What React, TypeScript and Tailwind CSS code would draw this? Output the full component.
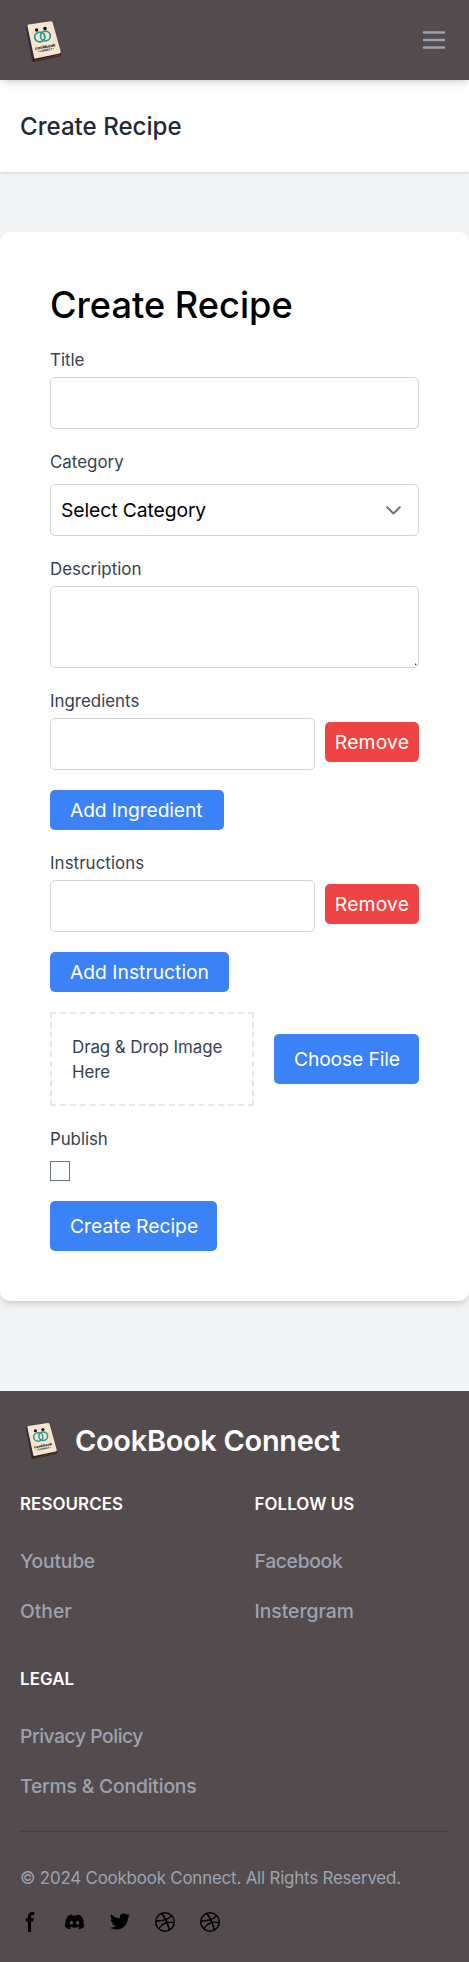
import type { ReactNode } from "react";

function Logo({ className }: { className: string }) {
  return (
    <svg className={className} viewBox="0 0 38 43" fill="none" aria-hidden="true">
      <path d="M2 5 L1 8 L7.6 41.5 L9.5 42 L35.6 36 L36.2 33 Z" fill="#2c1c18" />
      <path d="M2 5 L1.3 8 L7.6 40.5 L9.4 38 Z" fill="#263341" />
      <path d="M9 41 L35.4 34.8" stroke="#7a4a27" strokeWidth="0.8" />
      <path d="M3.6 4.4 L25.6 1.2 Q27.2 1 27.6 2.6 L35.7 31.6 Q36 33 34.6 33.4 L10.6 38.6 Q9.4 38.8 9.1 37.4 L2.4 6 Q2.2 4.7 3.6 4.4Z" fill="#f6e4cd" />
      <circle cx="11.6" cy="10" r="1.7" fill="#111" />
      <circle cx="20" cy="8.6" r="1.8" fill="#111" />
      <ellipse cx="14.8" cy="17" rx="5.2" ry="4.8" stroke="#2a9a94" strokeWidth="1.7" />
      <ellipse cx="20.4" cy="16" rx="4.9" ry="4.8" stroke="#2a9a94" strokeWidth="1.7" />
      <g transform="rotate(-11 20 27)" fill="#1b1b1b" fontFamily="Inter, sans-serif" fontWeight="800" textAnchor="middle">
        <text x="20.2" y="28.2" fontSize="4.2">cookbook</text>
        <text x="20.2" y="31.2" fontSize="2.6">• CONNECT •</text>
      </g>
    </svg>
  );
}

function Label({ children, className = "" }: { children: ReactNode; className?: string }) {
  return <label className={`block h-[25px] text-[16.9px] leading-[27px] text-[#374151] ${className}`}>{children}</label>;
}

const field = "block h-[52px] w-full min-w-0 rounded-[5px] border border-[#d1d5db] bg-white px-2.5 outline-none";
const blue = "block rounded-[5px] bg-[#3b82f6] px-5 text-left text-[19.3px] leading-[30px] whitespace-nowrap text-white";

function ListField({ label, add, labelClass, addClass }: { label: string; add: string; labelClass: string; addClass: string }) {
  return (
    <div className="mb-5">
      <Label className={labelClass}>{label}</Label>
      <div className="mt-[5px] mb-5 flex items-start gap-2.5">
        <input type="text" className={field} />
        <button type="button" className="mt-1 h-10 w-[94px] shrink-0 rounded-[5px] bg-[#ef4444] text-[19.3px] leading-[30px] tracking-[0.2px] text-white">
          Remove
        </button>
      </div>
      <button type="button" className={`${blue} h-10 ${addClass}`}>{add}</button>
    </div>
  );
}

function FooterColumn({ title, links }: { title: string; links: [string, string][] }) {
  return (
    <div>
      <h2 className="mb-[30px] h-[25px] text-[16.9px] leading-[27px] font-semibold tracking-[0.08px] text-white uppercase">{title}</h2>
      <ul className="flex flex-col gap-5 text-[19.3px] leading-[30px] font-medium text-[#9ca3af]">
        {links.map(([text, tracking]) => (
          <li key={text}>
            <a href="#" className={`whitespace-nowrap ${tracking}`}>{text}</a>
          </li>
        ))}
      </ul>
    </div>
  );
}

const dribbble =
  "M10 0a10 10 0 1 0 10 10A10.009 10.009 0 0 0 10 0Zm6.613 4.614a8.523 8.523 0 0 1 1.93 5.32 20.094 20.094 0 0 0-5.949-.274c-.059-.149-.122-.292-.184-.441a23.879 23.879 0 0 0-.566-1.239 11.41 11.41 0 0 0 4.769-3.366ZM8 1.707a8.821 8.821 0 0 1 2-.238 8.5 8.5 0 0 1 5.664 2.152 9.608 9.608 0 0 1-4.476 3.087A45.758 45.758 0 0 0 8 1.707ZM1.642 8.262a8.57 8.57 0 0 1 4.73-5.981A53.998 53.998 0 0 1 9.54 7.222a32.078 32.078 0 0 1-7.9 1.04h.002Zm2.01 7.46a8.51 8.51 0 0 1-2.2-5.707v-.262a31.64 31.64 0 0 0 8.777-1.219c.243.477.477.964.692 1.449-.114.032-.227.067-.336.1a13.569 13.569 0 0 0-6.942 5.636l.009.003ZM10 18.556a8.508 8.508 0 0 1-5.243-1.8 11.717 11.717 0 0 1 6.7-5.332.509.509 0 0 1 .055-.02 35.65 35.65 0 0 1 1.819 6.476 8.476 8.476 0 0 1-3.331.676Zm4.772-1.462A37.232 37.232 0 0 0 13.113 11a12.513 12.513 0 0 1 5.321.364 8.56 8.56 0 0 1-3.66 5.73h-.002Z";

const socials: { box: string; d: string }[] = [
  {
    box: "0 0 8 19",
    d: "M6.135 3H8V0H6.135a4.147 4.147 0 0 0-4.142 4.142V6H0v3h2v9.938h3V9h2.021l.592-3H5V3.591A.6.6 0 0 1 5.592 3h.543Z",
  },
  {
    box: "0 0 21 16",
    d: "M16.942 1.556a16.3 16.3 0 0 0-4.126-1.3 12.04 12.04 0 0 0-.529 1.1 15.175 15.175 0 0 0-4.573 0 11.585 11.585 0 0 0-.535-1.1 16.274 16.274 0 0 0-4.129 1.3A17.392 17.392 0 0 0 .182 13.218a15.785 15.785 0 0 0 4.963 2.521c.41-.564.773-1.16 1.084-1.785a10.63 10.63 0 0 1-1.706-.83c.143-.106.283-.217.418-.33a11.664 11.664 0 0 0 10.118 0c.137.113.277.224.418.33-.544.328-1.116.606-1.71.832a12.52 12.52 0 0 0 1.084 1.785 16.46 16.46 0 0 0 5.064-2.595 17.286 17.286 0 0 0-2.973-11.59ZM6.678 10.813a1.941 1.941 0 0 1-1.8-2.045 1.93 1.93 0 0 1 1.8-2.047 1.919 1.919 0 0 1 1.8 2.047 1.93 1.93 0 0 1-1.8 2.045Zm6.644 0a1.94 1.94 0 0 1-1.8-2.045 1.93 1.93 0 0 1 1.8-2.047 1.918 1.918 0 0 1 1.8 2.047 1.93 1.93 0 0 1-1.8 2.045Z",
  },
  {
    box: "0 0 20 17",
    d: "M20 1.892a8.178 8.178 0 0 1-2.355.635 4.074 4.074 0 0 0 1.8-2.235 8.344 8.344 0 0 1-2.605.98A4.13 4.13 0 0 0 13.85 0a4.068 4.068 0 0 0-4.1 4.038 4 4 0 0 0 .105.919A11.705 11.705 0 0 1 1.4.734a4.006 4.006 0 0 0 1.268 5.392 4.165 4.165 0 0 1-1.859-.5v.05A4.057 4.057 0 0 0 4.1 9.635a4.19 4.19 0 0 1-1.856.07 4.108 4.108 0 0 0 3.831 2.807A8.36 8.36 0 0 1 0 14.184 11.732 11.732 0 0 0 6.291 16 11.502 11.502 0 0 0 17.964 4.5c0-.177 0-.35-.012-.523A8.143 8.143 0 0 0 20 1.892Z",
  },
  { box: "0 0 20 20", d: dribbble },
  { box: "0 0 20 20", d: dribbble },
];

export default function App() {
  return (
    <div className="flex min-h-[1962px] w-full flex-col bg-[#f3f4f6] font-['Inter','Noto_Sans',sans-serif]">
      <nav className="relative z-10 flex h-20 items-center justify-between bg-[#544b4f] pr-5 pl-[25px] shadow-[0_5px_7.5px_-1.25px_rgba(0,0,0,0.1),0_2.5px_5px_-2.5px_rgba(0,0,0,0.1)]">
        <Logo className="mt-[3px] h-[43px] w-[38px]" />
        <button type="button" aria-label="Menu">
          <svg className="size-[30px] text-[#9ca3af]" viewBox="0 0 24 24" fill="none" stroke="currentColor" strokeWidth="2">
            <path strokeLinecap="round" d="M4 6h16M4 12h16M4 18h16" />
          </svg>
        </button>
      </nav>

      <header className="h-[92px] bg-white px-5 pt-[30px] shadow-[0_1.25px_3.75px_rgba(0,0,0,0.1),0_1.25px_2.5px_-1.25px_rgba(0,0,0,0.1)]">
        <h2 className="text-[24.1px] leading-[33px] font-[550] text-[#1f2937]">Create Recipe</h2>
      </header>

      <main className="pt-[60px] pb-[90px]">
        <form className="rounded-[10px] bg-white p-[50px] shadow-[0_5px_7.5px_-1.25px_rgba(0,0,0,0.1),0_2.5px_5px_-2.5px_rgba(0,0,0,0.1)]">
          <h1 className="mb-5 h-[45px] text-[36.2px] leading-[47px] font-[550] text-black">Create Recipe</h1>

          <Label>Title</Label>
          <input type="text" className={`${field} mt-[5px] mb-5`} />

          <Label>Category</Label>
          <button type="button" className="mt-2.5 mb-5 flex h-[52px] w-full items-center justify-between rounded-[5px] border border-[#d1d5db] bg-white pr-[17px] pl-2.5 text-[19.3px] leading-[30px] tracking-[-0.08px] text-black">
            Select Category
            <svg className="w-[15px]" viewBox="0 0 15 9" fill="none" stroke="#6b7280" strokeWidth="2" strokeLinecap="round" strokeLinejoin="round">
              <path d="M1.2 1.3 7.5 7.5l6.3-6.2" />
            </svg>
          </button>

          <Label>Description</Label>
          <div className="relative mt-[5px] mb-5">
            <textarea className="block h-[82px] w-full resize-none rounded-[5px] border border-[#d1d5db] bg-white outline-none" />
            <svg className="absolute right-[2px] bottom-[3px] size-[2px]" viewBox="0 0 2 2" aria-hidden="true">
              <path d="M0 0 L2 2 H0Z" fill="#333" />
            </svg>
          </div>

          <ListField label="Ingredients" add="Add Ingredient" labelClass="" addClass="w-[174px] tracking-[-0.14px]" />
          <ListField label="Instructions" add="Add Instruction" labelClass="tracking-[0.06px]" addClass="w-[179px]" />

          <div className="mb-5 flex items-center gap-5">
            <div className="h-[94px] flex-1 border-2 border-dashed border-[#e5e7eb] p-5">
              <p className="w-[156px] pt-px text-[16.9px] leading-[25px] tracking-[-0.06px] text-[#374151]">Drag &amp; Drop Image Here</p>
            </div>
            <button type="button" className={`${blue} h-[50px] w-[145px] shrink-0 tracking-[-0.15px]`}>Choose File</button>
          </div>

          <Label className="tracking-[-0.08px]">Publish</Label>
          <input type="checkbox" className="mt-2.5 mb-5 block size-5 appearance-none border border-[#6b7280] bg-white" />

          <button type="submit" className={`${blue} h-[50px] w-[167px]`}>Create Recipe</button>
        </form>
      </main>

      <footer className="flex-1 bg-[#544b4f] px-5 pt-[30px]">
        <div className="mb-[30px] flex h-10 items-center pl-[5px]">
          <Logo className="h-[38px] w-[34px]" />
          <span className="ml-4 text-[28.9px] leading-10 font-semibold tracking-[-0.26px] whitespace-nowrap text-white">CookBook Connect</span>
        </div>
        <div className="grid grid-cols-2 gap-10">
          <FooterColumn title="Resources" links={[["Youtube", "tracking-[-0.2px]"], ["Other", "tracking-normal"]]} />
          <FooterColumn title="Follow us" links={[["Facebook", "tracking-[-0.3px]"], ["Instergram", "tracking-normal"]]} />
          <FooterColumn title="Legal" links={[["Privacy Policy", "tracking-[-0.45px]"], ["Terms & Conditions", "tracking-[-0.18px]"]]} />
        </div>
        <div className="mt-[30px] border-t border-[#414047] pt-[34px]">
          <p className="text-[16.9px] leading-[25px] tracking-[-0.19px] whitespace-nowrap text-[#9ca3af]">© 2024 Cookbook Connect. All Rights Reserved.</p>
          <div className="mt-[21px] flex gap-[25px]">
            {socials.map((s, i) => (
              <svg key={i} className="size-5 fill-black" viewBox={s.box} aria-hidden="true">
                <path fillRule="evenodd" d={s.d} />
              </svg>
            ))}
          </div>
        </div>
      </footer>
    </div>
  );
}
